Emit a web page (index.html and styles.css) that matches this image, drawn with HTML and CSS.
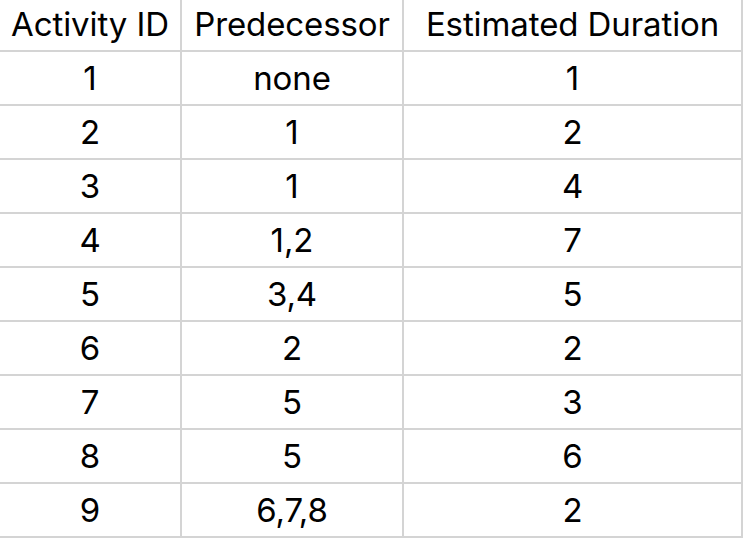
FILE: index.html
```html
<!DOCTYPE html>
<html>
<head>
<meta charset="utf-8">
<link rel="stylesheet" href="styles.css">
</head>
<body>
<div class="sheet">
  <div class="row head"><div class="cell">Activity ID</div><div class="cell">Predecessor</div><div class="cell">Estimated Duration</div></div>
  <div class="row"><div class="cell">1</div><div class="cell">none</div><div class="cell">1</div></div>
  <div class="row"><div class="cell">2</div><div class="cell">1</div><div class="cell">2</div></div>
  <div class="row"><div class="cell">3</div><div class="cell">1</div><div class="cell">4</div></div>
  <div class="row"><div class="cell">4</div><div class="cell">1,2</div><div class="cell">7</div></div>
  <div class="row"><div class="cell">5</div><div class="cell">3,4</div><div class="cell">5</div></div>
  <div class="row"><div class="cell">6</div><div class="cell">2</div><div class="cell">2</div></div>
  <div class="row"><div class="cell">7</div><div class="cell">5</div><div class="cell">3</div></div>
  <div class="row"><div class="cell">8</div><div class="cell">5</div><div class="cell">6</div></div>
  <div class="row"><div class="cell">9</div><div class="cell">6,7,8</div><div class="cell">2</div></div>
</div>
</body>
</html>
```
FILE: styles.css
```css
html, body {
  margin: 0;
  padding: 0;
  background: #fff;
  overflow: hidden;
}
.sheet {
  margin-top: -2px;
  display: grid;
  grid-template-columns: 182px 222px 339px;
  font-family: Inter, "Liberation Sans", sans-serif;
  font-size: 33px;
  letter-spacing: -0.1px;
  color: #000;
}
.row {
  display: contents;
}
.cell {
  height: 52px;
  border-right: 2px solid #d4d4d4;
  border-bottom: 2px solid #d4d4d4;
  display: flex;
  align-items: center;
  justify-content: center;
  white-space: nowrap;
}
```
